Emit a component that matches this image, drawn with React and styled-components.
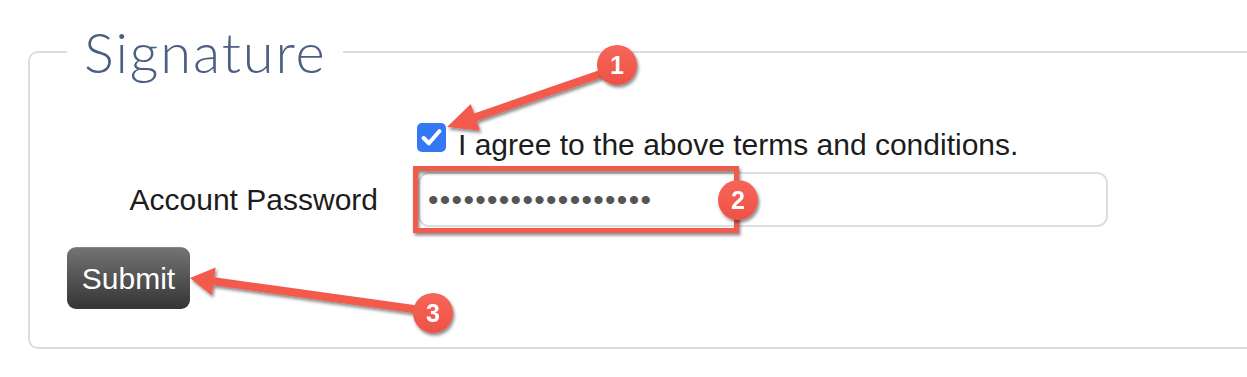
import React from "react";
import styled, { createGlobalStyle } from "styled-components";

const GlobalStyle = createGlobalStyle`
  html, body {
    margin: 0;
    padding: 0;
    background: #fff;
    overflow: hidden;
  }
  body {
    font-family: "Liberation Sans", Arial, sans-serif;
    color: #1c1c1c;
  }
`;

const RED = "#f25a4c";

// arrow polygon from tail to tip
const arrowPoints = (x1, y1, x2, y2, headLen, headW, shaft) => {
  const dx = x2 - x1;
  const dy = y2 - y1;
  const len = Math.hypot(dx, dy);
  const ux = dx / len;
  const uy = dy / len;
  const nx = -uy;
  const ny = ux;
  const bx = x2 - ux * headLen;
  const by = y2 - uy * headLen;
  const pts = [
    [x1 + nx * shaft / 2, y1 + ny * shaft / 2],
    [bx + nx * shaft / 2, by + ny * shaft / 2],
    [bx + nx * headW / 2, by + ny * headW / 2],
    [x2, y2],
    [bx - nx * headW / 2, by - ny * headW / 2],
    [bx - nx * shaft / 2, by - ny * shaft / 2],
    [x1 - nx * shaft / 2, y1 - ny * shaft / 2],
  ];
  return pts.map((p) => p.map((v) => v.toFixed(1)).join(",")).join(" ");
};

const Badge = ({ cx, cy, n }) => (
  <g filter="url(#shadow)">
    <circle cx={cx} cy={cy} r="20" fill="url(#badgeFill)" />
    <text
      x={cx}
      y={cy + 9}
      textAnchor="middle"
      fontFamily="Liberation Sans, Arial, sans-serif"
      fontWeight="700"
      fontSize="25"
      fill="#fff"
    >
      {n}
    </text>
  </g>
);

const Annotations = () => (
  <Overlay width="1247" height="377" viewBox="0 0 1247 377">
    <defs>
      <filter id="shadow" x="-20%" y="-20%" width="150%" height="150%">
        <feDropShadow dx="1.5" dy="2.5" stdDeviation="1.8" floodColor="#000" floodOpacity="0.45" />
      </filter>
      <linearGradient id="badgeFill" x1="0" y1="0" x2="0" y2="1">
        <stop offset="0" stopColor="#f6665a" />
        <stop offset="1" stopColor="#ee5244" />
      </linearGradient>
    </defs>

    <rect x="415.5" y="168.5" width="321" height="62" fill="none" stroke={RED} strokeWidth="5" filter="url(#shadow)" />

    <polygon points={arrowPoints(612, 70, 447, 127, 30, 28, 8)} fill={RED} filter="url(#shadow)" />
    <polygon points={arrowPoints(428, 311, 190, 278, 24, 28, 8)} fill={RED} filter="url(#shadow)" />

    <Badge cx={617} cy={65} n="1" />
    <Badge cx={738} cy={200} n="2" />
    <Badge cx={433} cy={313} n="3" />
  </Overlay>
);

const Page = styled.div`
  position: relative;
  width: 1247px;
  height: 377px;
  overflow: hidden;
`;

const Overlay = styled.svg`
  position: absolute;
  top: 0;
  left: 0;
  pointer-events: none;
`;

const Fieldset = styled.fieldset`
  box-sizing: border-box;
  margin: 18px 0 0 28px;
  width: 1300px;
  height: 331px;
  padding: 43px 0 0 37px;
  border: 2px solid #dcdcdc;
  border-radius: 10px;
`;

const Legend = styled.legend`
  padding: 0 16px 0 17px;
  margin: 0;
  font-family: Lato, "Open Sans", sans-serif;
  font-weight: 300;
  font-size: 56px;
  letter-spacing: 1.9px;
  line-height: 67px;
  color: #4a5f82;
`;

const FormGrid = styled.div`
  display: grid;
  grid-template-columns: 311px 690px;
  column-gap: 40px;
  align-items: center;
`;

const Label = styled.label`
  text-align: right;
  font-size: 30px;
  color: #1c1c1c;
`;

const CheckRow = styled.div`
  grid-column: 2;
  display: flex;
  align-items: flex-start;
  gap: 12px;
  margin: 0 0 10px -1px;
  font-size: 30px;
  line-height: 34px;
`;

const CheckBox = styled.span`
  display: flex;
  flex-shrink: 0;
  align-items: center;
  justify-content: center;
  width: 29px;
  height: 29px;
  border-radius: 5px;
  background: #3478f6;
  margin-top: -5px;
`;

const PasswordInput = styled.input`
  box-sizing: border-box;
  width: 690px;
  height: 55px;
  padding: 0 8px;
  border: 2px solid #dedede;
  border-radius: 11px;
  font-family: "Liberation Sans", Arial, sans-serif;
  font-size: 30px;
  letter-spacing: 1.3px;
  color: #555;
  outline: none;
  background: #fff;
`;

const SubmitButton = styled.button`
  grid-column: 1 / span 2;
  justify-self: start;
  width: 123px;
  height: 62px;
  margin-top: 20px;
  border: none;
  border-top: 1px solid #7c8798;
  border-radius: 9px;
  background: linear-gradient(#737373, #343434);
  color: #fff;
  font-family: "Liberation Sans", Arial, sans-serif;
  font-size: 30px;
  padding: 0;
  cursor: pointer;
`;

const App = () => {
  return (
    <Page>
      <GlobalStyle />
      <Fieldset>
        <Legend>Signature</Legend>
        <FormGrid>
          <CheckRow>
            <CheckBox>
              <svg width="21" height="19" viewBox="0 0 20 18">
                <path d="M2.5 9.5 L7.5 14.5 L17.5 3" fill="none" stroke="#fff" strokeWidth="3.8" strokeLinecap="round" strokeLinejoin="round" />
              </svg>
            </CheckBox>
            I agree to the above terms and conditions.
          </CheckRow>

          <Label htmlFor="pw">Account Password</Label>
          <PasswordInput id="pw" type="password" readOnly defaultValue="xxxxxxxxxxxxxxxxxxx" />

          <SubmitButton type="button">Submit</SubmitButton>
        </FormGrid>
      </Fieldset>
      <Annotations />
    </Page>
  );
};

export default App;
